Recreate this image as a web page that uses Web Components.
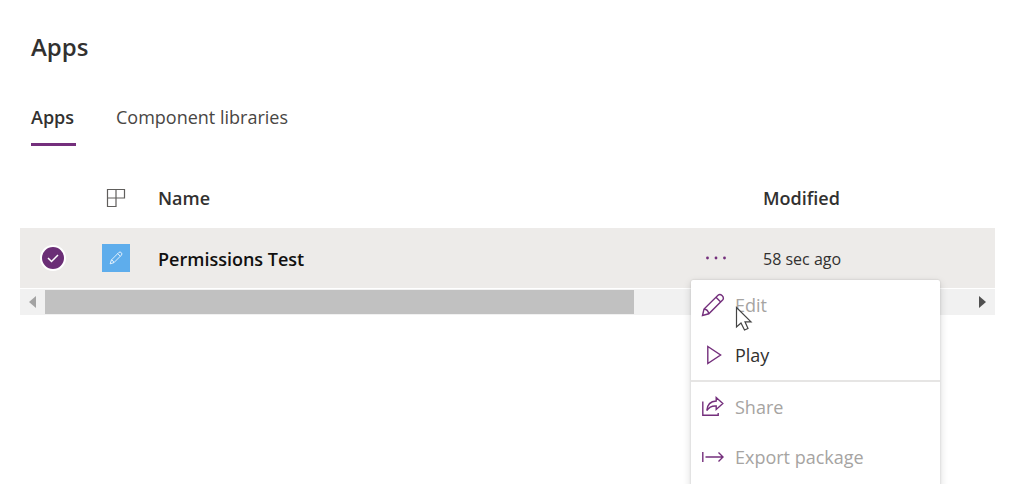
<!DOCTYPE html>
<html lang="en">
<head>
<meta charset="utf-8">
<meta name="viewport" content="width=device-width, initial-scale=1">
<title>Apps</title>
<style>
  html { height: 100%; }
  body {
    margin: 0; min-height: 100%; overflow: hidden; background: #fff; color: #323130;
    font-family: "Segoe UI", "Open Sans", "Noto Sans", sans-serif; font-size: 18px; line-height: 24px;
    --accent: #742f7c;
  }
</style>
</head>
<body>
<apps-page>
  <span slot="title">Apps</span>
  <page-tabs slot="tabs"></page-tabs>
  <app-list></app-list>
</apps-page>

<script>
const define = (name, html, setup) => {
  const template = document.createElement('template');
  template.innerHTML = html;
  customElements.define(name, class extends HTMLElement {
    constructor() {
      super();
      this.attachShadow({ mode: 'open' }).append(template.content.cloneNode(true));
    }
    connectedCallback() { if (setup) setup(this, this.shadowRoot); }
  });
};

const icons = {
  edit: ['0 0 24 24', '<path d="M1.5 22.5 3 16 17 2.2Q19 .6 21 2.6 23.4 5 21.6 7L7.8 20.8ZM3 16Q7 16.4 7.8 20.8M15 4.2 19.7 9"/>'],
  pencil: ['0 0 24 24', '<path d="M2 22 4 15.5 17 2.4Q19 .8 21 2.8 23.2 5 21.4 7L8.4 20ZM4 15.5Q7.6 16 8.4 20M15 4.5 19.4 9"/>'],
  play: ['0 0 24 24', '<path d="M6.8 3.5V20.5L19.6 12Z"/>'],
  share: ['0 0 24 24', '<path d="M1.8 6.5V20.2H17.2V18M15.2 2.5 21.8 8.5 15.2 14.5V11Q9 10.5 5.8 15.5 6.5 6.5 15.2 6Z"/>'],
  export: ['0 0 24 24', '<path d="M1.8 7V17M4.5 12H22M17.5 7.5 22 12 17.5 16.5"/>'],
  grid: ['0 0 20 20', '<path d="M1.5 1.5H18.5V10H10V18.5H1.5ZM10 1.5V10H1.5"/>'],
  more: ['0 0 24 24', '<g fill="currentColor" stroke="none"><circle cx="3.5" cy="12" r="1.4"/><circle cx="12" cy="12" r="1.4"/><circle cx="20.5" cy="12" r="1.4"/></g>'],
  left: ['0 0 12 12', '<path fill="currentColor" stroke="none" d="M9 0V12L2 6Z"/>'],
  right: ['0 0 12 12', '<path fill="currentColor" stroke="none" d="M2 0V12L9 6Z"/>'],
  cursor: ['0 0 18 26', '<path fill="#fff" d="M1.5 1.5V21L6 17 9.5 24 13 22.5 10 15.8H16Z"/>']
};
define('ui-icon', `
  <style>
    :host { display: inline-block; width: 24px; height: 24px; flex: none; }
    svg { display: block; width: 100%; height: 100%; fill: none; stroke: currentColor; stroke-width: var(--stroke, 1.4); }
  </style>
  <svg aria-hidden="true"></svg>`, (host, root) => {
  const icon = icons[host.getAttribute('name')];
  if (!icon) return;
  const svg = root.querySelector('svg');
  svg.setAttribute('viewBox', icon[0]);
  svg.innerHTML = icon[1];
});

define('menu-item', `
  <style>
    :host { display: block; }
    button {
      display: flex; align-items: center; gap: 10px; width: 100%; height: 50px; padding: 0 10px;
      border: 0; background: none; color: #323130; font: inherit; text-align: left;
    }
    button:disabled { color: #a6a4a2; }
    ui-icon { color: var(--accent); }
  </style>
  <button type="button" role="menuitem"><span><slot></slot></span></button>`, (host, root) => {
  const button = root.querySelector('button');
  if (!button.querySelector('ui-icon')) {
    const icon = document.createElement('ui-icon');
    icon.setAttribute('name', host.getAttribute('icon'));
    button.prepend(icon);
  }
  button.disabled = host.hasAttribute('disabled');
});

define('context-menu', `
  <style>
    :host {
      display: block; box-sizing: border-box; width: 249px; padding-bottom: 8px; background: #fff;
      border-radius: 2px; box-shadow: 0 3px 8px rgba(0,0,0,.16), 0 0 2px rgba(0,0,0,.16);
    }
    hr { height: 2px; margin: 0; border: 0; background: #e6e5e4; }
    .pointer { position: absolute; left: 44px; top: 26px; width: 18px; height: 26px; color: #444; --stroke: 1.2; }
  </style>
  <div role="menu">
    <menu-item icon="edit" disabled>Edit</menu-item>
    <menu-item icon="play">Play</menu-item>
    <hr>
    <menu-item icon="share" disabled>Share</menu-item>
    <menu-item icon="export" disabled>Export package</menu-item>
  </div>
  <ui-icon class="pointer" name="cursor"></ui-icon>`);

define('scroll-strip', `
  <style>
    :host { display: flex; height: 26px; background: #f1f1f1; }
    button { display: grid; place-items: center; width: 25px; padding: 0; border: 0; background: none; color: #505050; }
    button:disabled { color: #a3a3a3; }
    ui-icon { width: 12px; height: 12px; }
    .track { flex: 1; display: flex; padding: 1px 0; }
    .thumb { flex: 7; background: #c1c1c1; }
    .rest { flex: 4; }
  </style>
  <button type="button" aria-label="Scroll left" disabled><ui-icon name="left"></ui-icon></button>
  <div class="track"><div class="thumb"></div><div class="rest"></div></div>
  <button type="button" aria-label="Scroll right"><ui-icon name="right"></ui-icon></button>`);

define('page-tabs', `
  <style>
    :host { display: block; }
    nav { display: flex; gap: 40px; }
    a { min-width: 45px; padding: 14px 0; border-bottom: 3px solid transparent; color: #484644; text-decoration: none; }
    a[aria-current] { border-color: var(--accent); color: #323130; font-weight: 600; }
  </style>
  <nav><a href="#apps" aria-current="page">Apps</a><a href="#libraries">Component libraries</a></nav>`);

define('app-list', `
  <style>
    :host { display: block; }
    table { width: 100%; table-layout: fixed; border-collapse: collapse; margin-bottom: 1px; }
    th, td { height: 60px; padding: 0; text-align: left; vertical-align: middle; }
    th { font-weight: 600; }
    .check { width: 66px; text-align: center; }
    .type { width: 60px; text-align: center; }
    .name { padding-left: 12px; }
    .more { width: 60px; text-align: center; }
    .modified { width: 232px; padding-left: 17px; }
    tbody tr { background: #edebe9; }
    tbody .name { color: #11100f; font-weight: 600; }
    tbody .modified { font-size: 16px; }
    tbody .name, tbody .modified { height: 58px; padding-top: 2px; }
    tbody .more { position: relative; }
    .type ui-icon, .tile { display: block; margin: auto; }
    th ui-icon { width: 20px; height: 20px; color: #605e5c; --stroke: 1.2; }
    .tile { display: grid; place-items: center; width: 28px; height: 28px; background: #5eadec; color: #fff; }
    .tile ui-icon { width: 14px; height: 14px; }
    input {
      appearance: none; box-sizing: border-box; display: block; width: 26px; height: 26px; margin: auto;
      border: 2px solid #fff; border-radius: 50%;
      background: #6b2e76 url("data:image/svg+xml,%3Csvg xmlns='http://www.w3.org/2000/svg' viewBox='0 0 22 22'%3E%3Cpath d='M6 11l3.5 3.5L16 8' fill='none' stroke='white' stroke-width='1.5'/%3E%3C/svg%3E") center / 22px no-repeat;
    }
    .more button { display: grid; place-items: center; width: 32px; height: 32px; margin: auto; padding: 0; border: 0; background: none; color: var(--accent); }
    context-menu { position: absolute; left: 5px; top: 52px; }
  </style>
  <table>
    <thead><tr>
      <th class="check"></th>
      <th class="type"><ui-icon name="grid"></ui-icon></th>
      <th class="name">Name</th>
      <th class="more"></th>
      <th class="modified">Modified</th>
    </tr></thead>
    <tbody><tr>
      <td class="check"><input type="checkbox" checked aria-label="Select Permissions Test"></td>
      <td class="type"><span class="tile"><ui-icon name="pencil"></ui-icon></span></td>
      <td class="name">Permissions Test</td>
      <td class="more">
        <button type="button" aria-label="More commands"><ui-icon name="more"></ui-icon></button>
        <context-menu></context-menu>
      </td>
      <td class="modified">58 sec ago</td>
    </tr></tbody>
  </table>
  <scroll-strip></scroll-strip>`);

define('apps-page', `
  <style>
    :host { display: block; padding: 31px 29px 0 20px; }
    header { padding-left: 11px; }
    h1 { margin: 0 0 28px; font-size: 24px; line-height: 32px; font-weight: 600; }
    main { margin-top: 22px; }
  </style>
  <header><h1><slot name="title"></slot></h1><slot name="tabs"></slot></header>
  <main><slot></slot></main>`);
</script>
</body>
</html>
